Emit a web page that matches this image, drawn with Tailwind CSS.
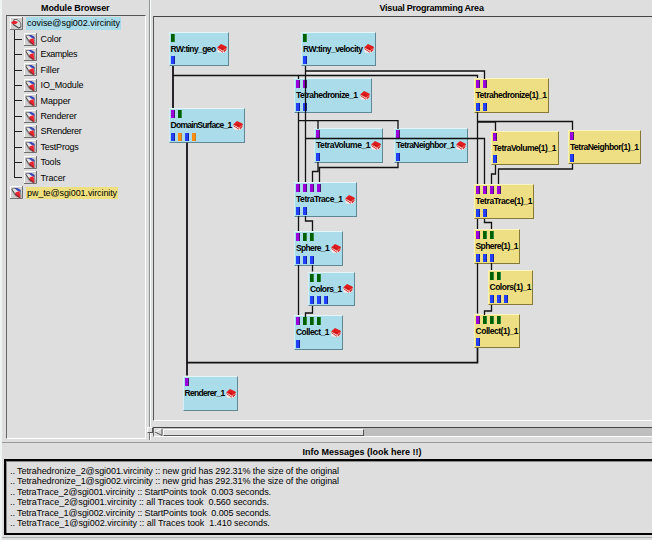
<!DOCTYPE html>
<html lang="en">
<head>
<meta charset="utf-8">
<title>COVISE Map Editor</title>
<script src="https://cdn.jsdelivr.net/npm/@tailwindcss/browser@4"></script>
</head>
<body class="w-[652px] h-[540px] overflow-hidden bg-[#dedede] text-black font-['Liberation_Sans',Arial,sans-serif]">
<svg class="hidden">
  <symbol id="folder" viewBox="0 0 13 13">
    <path d="M0 0h13v13H0z" fill="#cfcfcf"/>
    <path d="M.5 12.500V.5h12" stroke="#fff" fill="none"/>
    <path d="M0 12.500h12.500V0" stroke="#707070" fill="none"/>
    <path d="M2 2.500h3l5 1.500 1 7-2 .5-4-2L2.500 5z" fill="#e6e6e6" stroke="#666" stroke-width=".7"/>
    <path d="M4.500 2h3l3 2v2L7 4.500z" fill="#3a48b8"/>
    <path d="M5.500 6.500L9.500 5l1 6.500-1.500.3L5 9z" fill="#ee2430"/>
    <path d="M2 3.500l3.500 5 4 3" stroke="#333" stroke-width=".8" fill="none"/>
  </symbol>
  <symbol id="open" viewBox="0 0 13 13">
    <path d="M0 0h13v13H0z" fill="#cfcfcf"/>
    <path d="M.5 12.500V.5h12" stroke="#fff" fill="none"/>
    <path d="M0 12.500h12.500V0" stroke="#707070" fill="none"/>
    <path d="M4 2.500h3l3.500 3 .5 4.500-2 1L3 7z" fill="#ddd" stroke="#555" stroke-width=".8"/>
    <path d="M1 5.500l3-2 4 1.500-2 2-3 .5z" fill="#e3242d"/>
    <path d="M3 7.500l5.500 3.500 2-1" stroke="#333" stroke-width=".8" fill="none"/>
  </symbol>
  <symbol id="book" viewBox="0 0 10 9">
    <path d="M0 5L4.500 3 10 5v1.500L7 9 1 8.500z" fill="#f8ebe8"/>
    <path d="M.2 3.600L4 .1 9.300 2.400 10 3.800 6 6.800z" fill="#e01c1c"/>
    <path d="M.5 4.700l5.500 3.600" stroke="#d03030" stroke-width="1" fill="none"/>
    <path d="M6.500 6.800l3-2.300v1.500L7 8.500z" fill="#d02828"/>
    <path d="M3 3.500l3 1.500" stroke="#a01018" stroke-width=".6"/>
  </symbol>
</svg>
<div class="flex flex-col w-full h-full border-l-2 border-[#eef4f2]">
  <div class="flex h-[442px] shrink-0">
    <!-- Module browser -->
    <section class="flex flex-col w-[145px] shrink-0 pl-1 pr-px">
      <h1 class="h-[15px] pl-[35px] pt-[2px] text-[9px] leading-[12px] font-bold whitespace-nowrap"><span data-w="68.5" data-font="bold 9px">Module Browser</span></h1>
      <div class="relative h-[424px] border-t border-l border-t-[#555] border-l-[#666] border-b border-r border-b-white border-r-white">
        <svg class="absolute left-0 top-0 w-[20px] h-[170px]" viewBox="7 16 20 170" fill="none" stroke="#222" shape-rendering="crispEdges"><path d="M14.500 30V177.500M14 39.500h8M14 54.500h8M14 70.500h8M14 85.500h8M14 100.500h8M14 116.500h8M14 131.500h8M14 147.500h8M14 162.500h8M14 177.500h8"/></svg>
        <div id="tree" class="relative flex flex-col"></div>
      </div>
    </section>
    <!-- Sash -->
    <div class="w-[6px] shrink-0 flex flex-col items-center">
      <div class="w-[2px] h-[427px] bg-[#8c968e] border-r border-white"></div>
      <div class="w-[6px] h-[6px] bg-[#dedede] border border-t-white border-l-white border-r-[#555] border-b-[#555]"></div>
      <div class="w-[2px] h-[7px] bg-[#777] border-r border-white"></div>
    </div>
    <!-- Programming area -->
    <section class="flex flex-col w-[499px]">
      <h1 class="h-[16px] pl-[226.5px] pt-[2px] text-[9px] leading-[12px] font-bold whitespace-nowrap"><span data-w="104.5" data-font="bold 9px">Visual Programming Area</span></h1>
      <div class="relative h-[405px] border-t border-l border-b border-t-[#444] border-l-[#555] border-b-white overflow-hidden">
        <div id="nodes"></div>
        <svg class="absolute left-0 top-0 w-[498px] h-[403px]" viewBox="154 17 498 403" fill="none" stroke="#111" stroke-width="1.300">
          <path d="M306 73H483.500" stroke="#fff" stroke-width="1" opacity=".8"/>
          <path stroke-width="2" stroke="#2a242c" d="M173 66V108M187 142.500V375.500"/>
          <path d="M173 75.500H477.500V78M298.500 75.500V79M305.500 66V182M305.500 71H484.500V79"/>
          <path d="M298.500 112V182M298.500 120.700H398V129M318 120.700V129M305.500 138.500H484.500V184"/>
          <path d="M398 162V167.500H319.500V182M318 162V171.500H312.500V182"/>
          <path d="M298.500 216V231M305.500 216V221H312.500V231M298.500 265V315M312.500 265V271.500M312.500 306V313H305.500V317"/>
          <path d="M477.500 112V184M477.500 122H495.500V131M477.500 121.500H572.500V130"/>
          <path d="M495.500 165V174H491.500V184M572.500 164V169H498.500V184"/>
          <path d="M477.500 219V229M484.500 219V222.500H491.500V229M477.500 263V313.500M491.500 263V270M491.500 305V311H484.500V315"/>
          <path stroke-width="1.700" d="M477.500 348V362.700H187"/>
        </svg>
      </div>
      <div class="flex items-center h-[10px] mt-[6px] bg-[#bebebe] border-t border-l border-b border-t-[#444] border-l-[#666] border-b-white">
        <svg class="w-[9px] h-[8px]" viewBox="0 0 9 8"><path d="M0 0h9v8H0z" fill="#dedede"/><path d="M8 .5L1 4l7 3.500z" fill="#d6d6d6"/><path d="M8 .5L1 4" stroke="#fff"/><path d="M1 4l7 3.500V.5" stroke="#555" fill="none"/></svg>
        <div class="w-[201px] h-[7px] bg-[#dedede] border border-t-white border-l-white border-r-[#555] border-b-[#555]"></div>
      </div>
    </section>
  </div>
  <!-- Info messages -->
  <section class="flex flex-col h-[98px] border-t border-[#999]">
    <h1 class="h-[16px] pl-[300.5px] pt-[3px] text-[9px] leading-[12px] font-bold whitespace-nowrap"><span data-w="119" data-font="bold 9px">Info Messages (look here !!)</span></h1>
    <div class="ml-[2px] h-[76px] border-2 border-r-0 border-black shrink-0">
      <div id="log" class="h-full border-t border-l border-[#888] pl-[3px] pt-[3.500px] text-[9px] leading-[10.5px] whitespace-pre"></div>
    </div>
    <div class="mt-[2px] h-px bg-[#aab0ac] shrink-0"></div>
  </section>
</div>
<script>
// Letter spacing that makes a label exactly w pixels wide
const pen = document.createElement('canvas').getContext('2d');
const spacing = (text, w, font) => {
  pen.font = font + ' "Liberation Sans", Arial, sans-serif';
  return (w - pen.measureText(text).width) / text.length;
};
const label = (text, w, font) => `<span style="letter-spacing:${spacing(text, w, font)}px">${text}</span>`;
document.querySelectorAll('[data-w]').forEach(e => {
  e.style.letterSpacing = spacing(e.textContent, +e.dataset.w, e.dataset.font) + 'px';
});

const tree = [['Color',21],['Examples',36.5],['Filler',19],['IO_Module',43],['Mapper',30],['Renderer',36],['SRenderer',41],['TestProgs',38],['Tools',20],['Tracer',25]];
const host = (icon, text, w, bg) => `<div class="flex items-center h-[15.4px] pl-[2.500px] text-[9px] leading-[12px] whitespace-nowrap"><svg class="w-[13px] h-[13px] mr-[3.500px]"><use href="#${icon}"/></svg><span class="${bg} px-[1px] h-[12.500px]">${label(text, w, '9px')}</span></div>`;
document.getElementById('tree').innerHTML =
  host('open', 'covise@sgi002.vircinity', 93, 'bg-[#a9dbe8]') +
  tree.map(([t, w]) => `<div class="flex items-center h-[15.4px] pl-[16.500px] text-[9px] leading-[12px] whitespace-nowrap"><svg class="w-[13px] h-[13px] mr-[4px]"><use href="#folder"/></svg>${label(t, w, '9px')}</div>`).join('') +
  host('folder', 'pw_te@sgi001.vircinity', 90, 'bg-[#efe07f]');

// name, x, y, width, height, label width, input ports, output ports, second host
const nodes = [
  ['RW:tiny_geo',168.5,31.5,60.5,34.5,45,'g','b'],
  ['RW:tiny_velocity',301,31.5,75,34.5,59.5,'g','b'],
  ['DomainSurface_1',168.5,107.5,76.5,35,61,'pg','bobo'],
  ['Tetrahedronize_1',294,78,77.5,34.5,61.5,'pp','bb'],
  ['TetraVolume_1',314,128,69,34.5,54,'p','b'],
  ['TetraNeighbor_1',394,128,74,34.5,58.5,'p','b'],
  ['TetraTrace_1',294,182,63,34.5,46.5,'pppp','bb'],
  ['Sphere_1',294,231,49,34.5,33,'pgg','bbb'],
  ['Colors_1',308,271.5,47,34.5,31.5,'gg','bbb'],
  ['Collect_1',294,315,49,34.5,33,'pggg','b'],
  ['Renderer_1',182.5,375.5,55.5,35,40,'p',''],
  ['Tetrahedronize(1)_1',473.5,78,75.5,34.5,71,'pp','bb',1],
  ['TetraVolume(1)_1',491,130.5,67.5,34.5,63,'p','b',1],
  ['TetraNeighbor(1)_1',568,129.5,72.5,34.5,68.5,'p','b',1],
  ['TetraTrace(1)_1',473.5,184,60.5,34.5,56.5,'pppp','bb',1],
  ['Sphere(1)_1',473.5,229,46.5,34.5,42.5,'pgg','bbb',1],
  ['Colors(1)_1',487.5,270,45.5,34.5,41.5,'gg','bbb',1],
  ['Collect(1)_1',473.5,313.5,46.5,34.5,42.5,'pggg','b',1],
];
const portColor = {
  g: 'bg-[#006000] border-r-[#2c8a3a]', p: 'bg-[#9c00dc] border-r-[#4b1670]',
  b: 'bg-[#2440ff] border-r-[#1424a0]', o: 'bg-[#ff8c08] border-r-[#c08030]' };
const ports = s => [...s].map(c => `<i class="block w-[4px] h-[8px] border-r ${portColor[c]}"></i>`).join('');
document.getElementById('nodes').innerHTML = nodes.map(([t,x,y,w,h,tw,a,b,alt]) =>
  `<div class="absolute flex flex-col justify-between pt-[1px] pb-[1px] pl-[1px] border ${alt ? 'bg-[#efdf84] border-t-[#fbf5c4] border-l-[#fbf5b0] border-r-[#85793a] border-b-[#85793a]' : 'bg-[#aadcea] border-t-[#e4f6fa] border-l-[#d4f0f6] border-r-[#5f8894] border-b-[#5f8894]'}" style="left:${x-154}px;top:${y-17}px;width:${w}px;height:${h}px">
    <div class="flex gap-[3px] h-[8px]">${ports(a)}</div>
    <div class="flex items-center justify-between text-[8.5px] leading-[10px] font-bold whitespace-nowrap pr-[1px]">${label(t, tw, 'bold 8.5px')}${alt ? '' : '<svg class="w-[10px] h-[9px] shrink-0"><use href="#book"/></svg>'}</div>
    <div class="flex gap-[3px] h-[8px]">${ports(b)}</div>
  </div>`).join('');

const log = [
  ['Tetrahedronize_2@sgi001.vircinity :: new grid has 292.31% the size of the original',322],
  ['Tetrahedronize_1@sgi002.vircinity :: new grid has 292.31% the size of the original',322],
  ['TetraTrace_2@sgi001.vircinity :: StartPoints took  0.003 seconds.',254],
  ['TetraTrace_2@sgi001.vircinity :: all Traces took  0.560 seconds.',252],
  ['TetraTrace_1@sgi002.vircinity :: StartPoints took  0.005 seconds.',254],
  ['TetraTrace_1@sgi002.vircinity :: all Traces took  1.410 seconds.',253],
];
document.getElementById('log').innerHTML = log.map(([t, w]) => `<div class="h-[10.5px]"><span class="inline-block w-[7px]">..</span>${label(t, w, '9px')}</div>`).join('');
</script>
</body>
</html>
